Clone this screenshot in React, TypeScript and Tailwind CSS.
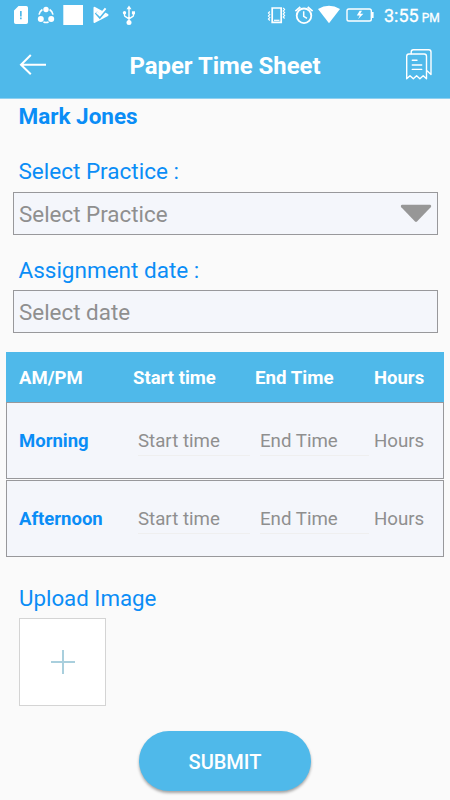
import { useState } from "react";

const rows = ["Morning", "Afternoon"];

function StatusBar() {
  return (
    <div className="flex h-[31px] items-center justify-between">
      <svg width="150" height="31" viewBox="0 0 150 31" fill="#fff">
        {/* sim card */}
        <path
          fillRule="evenodd"
          d="M18.5 6H26.2Q28 6 28 7.8V22.2Q28 24 26.2 24H15.8Q14 24 14 22.2V10.5ZM20 11V16.5H21.7V11ZM20 17.6V19.3H21.7V17.6Z"
        />
        {/* share circle */}
        <circle cx="46" cy="9.5" r="2.7" />
        <circle cx="40.8" cy="19" r="3" />
        <circle cx="51.2" cy="19" r="3" />
        <path
          d="M42.4 9.5A7.6 7.6 0 0 0 39 14.7M49.6 9.5A7.6 7.6 0 0 1 53 14.7M43.4 22A7.6 7.6 0 0 0 48.6 22"
          fill="none"
          stroke="#fff"
          strokeWidth="1.6"
        />
        <path d="M63.3 5H83V25H63.3Z" />
        {/* play check */}
        <path d="M95 7L108 14Q109.3 15 108 16L95 22.8Q93.5 23.4 93.5 22V8Q93.5 6.4 95 7Z" />
        <path d="M96 12.5L99.8 16.8L106 9.5" fill="none" stroke="#4fb9ea" strokeWidth="3.2" />
        <path d="M96.6 12.3L99.8 15.3L105.6 8.4" fill="none" stroke="#fff" strokeWidth="2" />
        {/* usb */}
        <path
          d="M129 8V22M124.5 12.5V15.2Q124.5 16.2 125.5 16.7L129 18.8M133.5 12.5V15.2Q133.5 16.2 132.5 16.7L129 18.8"
          fill="none"
          stroke="#fff"
          strokeWidth="1.4"
        />
        <path d="M126.5 9.2L129 5.6L131.5 9.2Z" />
        <circle cx="129" cy="22.4" r="2.5" />
        <circle cx="124.5" cy="12.8" r="1.7" />
        <path d="M131.9 11.3H135V14.3H131.9Z" />
      </svg>
      <div className="flex items-center">
        <svg width="120" height="31" viewBox="264 0 120 31" fill="none" stroke="#fff">
          {/* vibrate */}
          <path d="M272.2 8H281.2V22.3H272.2Z" strokeWidth="1.7" />
          <path d="M274 20.3H279.5" strokeWidth="1.2" />
          <path
            d="M269.8 11.5L268.4 13L269.8 14.5L268.4 16L269.8 17.5L268.4 19L269.8 20.5M283.2 8L284.6 9.5L283.2 11L284.6 12.5L283.2 14L284.6 15.5L283.2 17L284.6 18.5"
            strokeWidth="1.1"
          />
          {/* alarm */}
          <circle cx="304" cy="15.8" r="7.3" strokeWidth="1.8" />
          <path d="M295.4 11.2L300.3 7M312.6 11.2L307.7 7" strokeWidth="1.7" />
          <path d="M303.7 11.2V16.3L307 18.4" strokeWidth="1.5" />
          <path d="M318 9Q329 2.3 340 9L329 23.2Z" fill="#fff" stroke="none" />
          {/* battery */}
          <rect x="347" y="9" width="24.3" height="12" rx="1.8" strokeWidth="1.4" />
          <path d="M372.8 12V18" strokeWidth="1.6" />
          <path d="M359.7 10.7L356.8 15.6H359.8L358 19.2L363.4 13.8H360.2L362 10.7Z" fill="#fff" stroke="none" />
        </svg>
        <div className="flex w-[66px] items-baseline whitespace-nowrap pt-[1px] text-white">
          <span className="text-[18px] leading-[30px] [-webkit-text-stroke:0.3px_white]">3:55</span>
          <span className="ml-[3px] text-[12px] [-webkit-text-stroke:0.3px_white]">PM</span>
        </div>
      </div>
    </div>
  );
}

function Toolbar() {
  return (
    <div className="flex h-[67px] items-center justify-between text-white">
      <svg width="66" height="67" viewBox="0 31 66 67" fill="none" stroke="#fff" strokeWidth="2">
        <path d="M46 64.7H21M30.8 55L21 64.7L30.8 74.3" />
      </svg>
      <h1 className="whitespace-nowrap pt-[3px] text-[23.9px] font-bold leading-[64px]">Paper Time Sheet</h1>
      <svg
        width="66"
        height="67"
        viewBox="384 31 66 67"
        fill="none"
        stroke="#fff"
        strokeWidth="1.4"
        strokeLinejoin="round"
        strokeLinecap="round"
      >
        <path d="M406.7 78.7V56.2Q406.7 54 408.9 54H424.3Q426.5 54 426.5 56.2V78.7L423.2 75.8L419.9 78.7L416.6 75.8L413.3 78.7L410 75.8Z" />
        <path d="M411.2 53.7V52Q411.2 49.8 413.4 49.8H428.8Q431 49.8 431 52V74.5L427.3 71" />
        <path d="M412.3 60.3H417M412.3 65H421.7M412.3 69.4H421.7" />
      </svg>
    </div>
  );
}

export default function App() {
  const [practice, setPractice] = useState("");
  const [date, setDate] = useState("");

  return (
    <div className="flex h-[800px] w-[450px] flex-col overflow-hidden bg-[#fafafa] font-['Roboto',sans-serif] text-[#0a8df6]">
      <header className="h-[98px] shrink-0 border-b border-[#8fd1f1] bg-[#4fb9ea] box-content">
        <StatusBar />
        <Toolbar />
      </header>

      <div className="px-[12.5px]">
        <p className="mt-[3px] pl-1.5 text-[22.5px] font-bold leading-[28px]">Mark Jones</p>

        <label className="mt-[27px] block pl-1.5 text-[22.5px] leading-[28px]">Select Practice :</label>
        <div className="mt-[7px] flex h-[43px] items-center border border-[#98989b] bg-[#f4f6fb] pl-[5.5px] pr-[5px]">
          <input
            className="min-w-0 flex-1 bg-transparent pt-[2px] text-[22.4px] outline-none placeholder:text-[#8f8f8f]"
            placeholder="Select Practice"
            value={practice}
            onChange={(e) => setPractice(e.target.value)}
          />
          <svg width="32" height="19" viewBox="0 0 32 19" fill="#979797">
            <path d="M2.2 0.7H29.8Q32 1.2 30.7 3.3L17 17.5Q16 18.3 15 17.5L1.3 3.3Q0 1.2 2.2 0.7Z" />
          </svg>
        </div>

        <label className="mt-[21px] block pl-1.5 text-[22.5px] leading-[28px]">Assignment date :</label>
        <div className="mt-[6px] flex h-[43px] items-center border border-[#98989b] bg-[#f4f6fb] pl-[5.5px]">
          <input
            className="min-w-0 flex-1 bg-transparent pt-[2px] text-[22.4px] outline-none placeholder:text-[#8f8f8f]"
            placeholder="Select date"
            value={date}
            onChange={(e) => setDate(e.target.value)}
          />
        </div>
      </div>

      <div className="mx-[6px] mt-[19px] text-[18.5px]">
        <div className="grid h-[50px] grid-cols-[114px_122px_119px_1fr] items-center bg-[#4fb9ea] pl-[13px] pt-[3px] font-bold text-white">
          <span>AM/PM</span>
          <span>Start time</span>
          <span className="text-[18.7px]">End Time</span>
          <span>Hours</span>
        </div>
        {rows.map((row) => (
          <div
            key={row}
            className="mb-[1px] grid h-[77px] grid-cols-[119px_122px_114px_1fr] items-center border border-[#98989b] bg-[#f4f6fb] pl-[12px]"
          >
            <span className="pt-[2px] font-bold">{row}</span>
            <input
              className="h-[30px] w-[112px] border-b border-[#efefef] bg-transparent pt-[2px] text-[18.7px] outline-none placeholder:text-[#8f8f8f]"
              placeholder="Start time"
            />
            <input
              className="h-[30px] w-[109px] border-b border-[#efefef] bg-transparent pt-[2px] text-[18.7px] outline-none placeholder:text-[#8f8f8f]"
              placeholder="End Time"
            />
            <span className="pt-[2px] text-[18.7px] text-[#8f8f8f]">Hours</span>
          </div>
        ))}
      </div>

      <div className="pl-[19px]">
        <p className="mt-[26px] text-[22.3px] leading-[28px]">Upload Image</p>
        <button className="mt-[6px] flex h-[88px] w-[87px] items-center justify-center border border-[#d4d4d4] bg-white">
          <svg width="24" height="24" viewBox="0 0 24 24" stroke="#a9cfdd" strokeWidth="2">
            <path d="M12 0V24M0 12H24" />
          </svg>
        </button>
      </div>

      <button className="mx-auto mt-[25px] h-[60px] w-[172px] shrink-0 rounded-full bg-[#4fb9ea] pt-[2px] text-[20px] font-medium text-white shadow-[0_2px_3px_rgba(0,0,0,0.35)]">
        SUBMIT
      </button>
    </div>
  );
}
